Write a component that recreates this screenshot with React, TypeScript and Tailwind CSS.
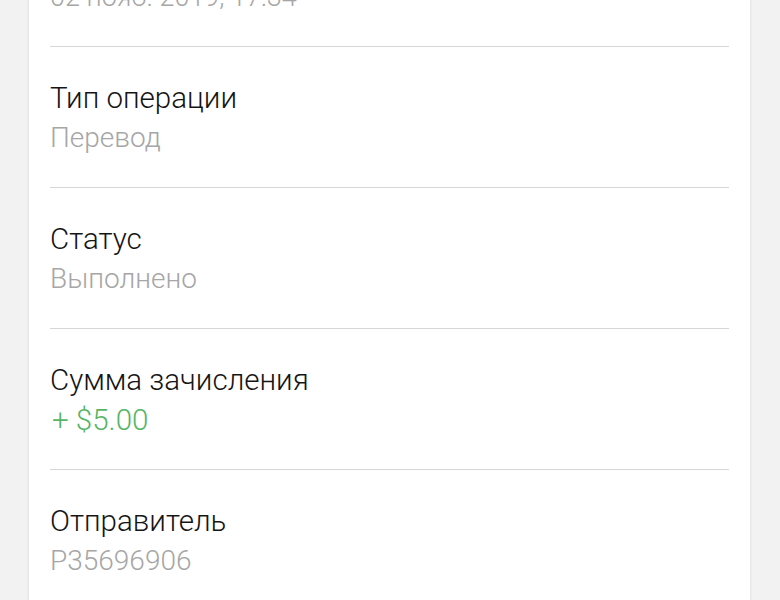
const rows = [
  { label: "Тип операции", value: "Перевод", tone: "gray" },
  { label: "Статус", value: "Выполнено", tone: "gray" },
  { label: "Сумма зачисления", value: "+ $5.00", tone: "green" },
  { label: "Отправитель", value: "P35696906", tone: "gray" },
];

function Row({ label, value, tone }: { label: string; value: string; tone: string }) {
  return (
    <div className="border-t border-[#d6d6d6] pt-[31px] pb-[29px]">
      <div className="text-[29.5px] leading-[40px] text-[#151515]">{label}</div>
      <div
        className={
          tone === "green"
            ? "pl-[2px] text-[29.5px] leading-[40px] text-[#55b565]"
            : "text-[28px] leading-[40px] text-[#a6a6a6]"
        }
      >
        {value}
      </div>
    </div>
  );
}

export default function App() {
  return (
    <div className="h-[600px] w-[780px] overflow-hidden bg-[#f2f2f2] pl-[29px] pr-[30px] font-['Roboto',sans-serif] font-light">
      <div className="-mt-[23px] min-h-[700px] bg-white px-[21px] shadow-[0_0_3px_rgba(0,0,0,0.12)]">
        <div className="pb-[29px] text-[27px] leading-[40px] text-[#a6a6a6]">02 нояб. 2019, 17:34</div>
        {rows.map((r) => (
          <Row key={r.label} {...r} />
        ))}
      </div>
    </div>
  );
}
